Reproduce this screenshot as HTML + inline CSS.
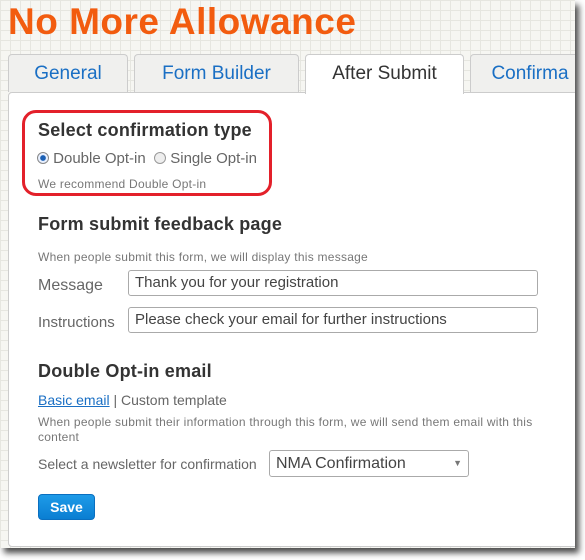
<!DOCTYPE html><html><head><style>
body{margin:0;width:585px;height:560px;background:#fff;position:relative;overflow:hidden;font-family:"Liberation Sans",Arial,sans-serif}
#shot{position:absolute;left:0;top:0;width:575px;height:548px;background-color:#f6f6f2;background-image:linear-gradient(#e6e6e0 1px,transparent 1px),linear-gradient(90deg,#e6e6e0 1px,transparent 1px);background-size:10px 10px;box-shadow:4px 5px 6px rgba(0,0,0,.7);overflow:hidden}
h1{position:absolute;left:8px;top:1px;margin:0;font-size:37px;font-weight:bold;color:#f25c0f;letter-spacing:0.5px}
.tab{position:absolute;top:54px;height:38px;background:#f0f0ee;border:1px solid #ccc;border-bottom:none;border-radius:4px 4px 0 0;box-sizing:border-box;font-size:19px;color:#1a6fc4;text-align:center;line-height:38px}
.panel{position:absolute;left:8px;top:92px;width:580px;height:455px;background:#fff;border:1px solid #ccc;border-radius:4px;box-sizing:border-box}
.a{position:absolute;color:#333;white-space:nowrap}
h3{position:absolute;margin:0;font-size:18px;font-weight:bold;color:#333;letter-spacing:0.2px}
.s{font-size:12px;color:#777;letter-spacing:0.25px}
.l{font-size:16px;color:#666}
.in{position:absolute;height:26px;border:1px solid #aaa;border-radius:3px;box-sizing:border-box;font-size:15px;color:#444;padding-left:6px;line-height:24px;background:#fff}
</style></head><body><div id="shot">
<h1>No More Allowance</h1>
<div class="tab" style="left:8px;width:120px">General</div>
<div class="tab" style="left:134px;width:165px">Form Builder</div>
<div class="tab" style="left:305px;width:159px;background:#fff;color:#333;height:40px;z-index:2">After Submit</div>
<div class="tab" style="left:470px;width:120px">Confirma</div>
<div class="panel"></div>
<div style="position:absolute;left:22px;top:110px;width:250px;height:86px;border:3px solid #e3202a;border-radius:14px;box-sizing:border-box"></div>
<h3 style="left:38px;top:120px">Select confirmation type</h3>
<div class="a l" style="left:37px;top:150px;font-size:15px"><span style="display:inline-block;width:10px;height:10px;border:1px solid #888;border-radius:50%;background:radial-gradient(#1a5fb4 35%,#e8f0ff 45%);vertical-align:-1px"></span> Double Opt-in &nbsp;<span style="display:inline-block;width:10px;height:10px;border:1px solid #999;border-radius:50%;background:#eee;vertical-align:-1px"></span> Single Opt-in</div>
<div class="a s" style="left:38px;top:177px">We recommend Double Opt-in</div>
<h3 style="left:38px;top:214px">Form submit feedback page</h3>
<div class="a s" style="left:38px;top:250px">When people submit this form, we will display this message</div>
<div class="a l" style="left:38px;top:277px">Message</div>
<div class="in" style="left:128px;top:270px;width:410px">Thank you for your registration</div>
<div class="a l" style="left:38px;top:314px;font-size:15px">Instructions</div>
<div class="in" style="left:128px;top:307px;width:410px">Please check your email for further instructions</div>
<h3 style="left:38px;top:361px">Double Opt-in email</h3>
<div class="a" style="left:38px;top:392px;font-size:14px;color:#666"><span style="color:#1a6fc4;text-decoration:underline">Basic email</span> | Custom template</div>
<div class="a s" style="left:38px;top:415px;line-height:15px;white-space:normal;width:500px">When people submit their information through this form, we will send them email with this content</div>
<div class="a l" style="left:38px;top:456px;font-size:14px">Select a newsletter for confirmation</div>
<div class="in" style="left:269px;top:450px;width:200px;height:27px;line-height:25px;font-size:16px">NMA Confirmation<span style="position:absolute;right:6px;font-size:9px;color:#777">▼</span></div>
<div style="position:absolute;left:38px;top:494px;width:57px;height:26px;background:linear-gradient(#1e9be8,#0a7ed2);border:1px solid #0a6fc0;border-radius:4px;box-sizing:border-box;color:#fff;font-weight:bold;font-size:14px;text-align:center;line-height:24px">Save</div>
</div></body></html>
